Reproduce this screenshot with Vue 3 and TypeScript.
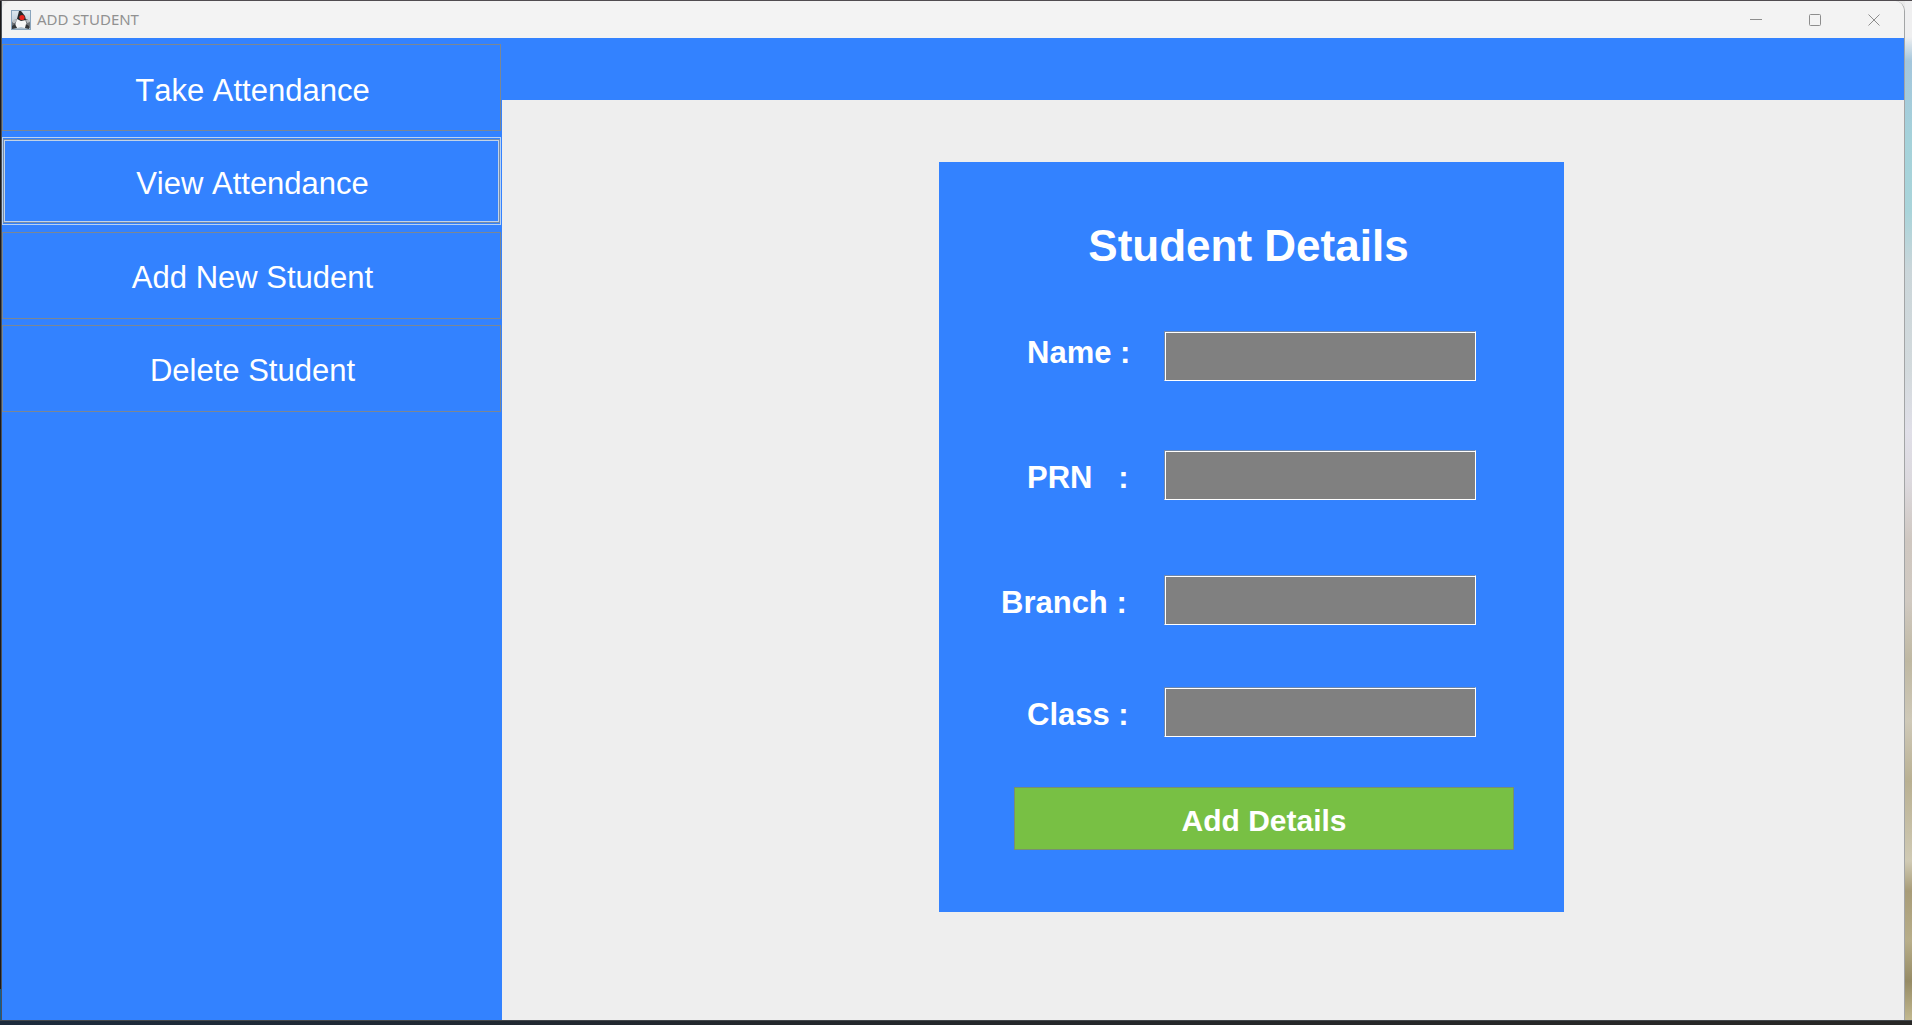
<script setup lang="ts">
import { reactive, ref } from 'vue'

interface Field {
  key: 'name' | 'prn' | 'branch' | 'class'
  label: string
}

const menu: string[] = ['Take Attendance', 'View Attendance', 'Add New Student', 'Delete Student']
const focused = ref('View Attendance')

const fields: Field[] = [
  { key: 'name', label: 'Name :' },
  { key: 'prn', label: 'PRN   :' },
  { key: 'branch', label: 'Branch :' },
  { key: 'class', label: 'Class :' },
]
const student = reactive({ name: '', prn: '', branch: '', class: '' })
</script>

<template>
  <div class="desktop">
    <div class="edge-left"></div>
    <div class="window">
      <header class="titlebar">
        <svg class="app-icon" viewBox="0 0 20 20" aria-hidden="true">
          <defs>
            <linearGradient id="iconBg" x1="0" y1="0" x2="0" y2="1">
              <stop offset="0" stop-color="#dfe9f1" />
              <stop offset="1" stop-color="#a9bccb" />
            </linearGradient>
          </defs>
          <rect x="0.5" y="0.5" width="19" height="19" fill="url(#iconBg)" stroke="#8aa5bd" />
          <path d="M1 12 L5 9 L7 10 L5 14 L6 18 L1 18Z M13 9 L16 9 L19 12 L19 18 L14 18Z" fill="#6d7378" />
          <path d="M6 9 L14 9 L16 16 L14 18 L10 17 L6 18 L4 16Z" fill="#f6f7f7" />
          <path d="M8 1 L10 1 L14 6 L15 10 L10 11 L6 9Z" fill="#26282b" />
          <path d="M1 11 L4 9 L6 10 L4 13 L2 13Z M15 10 L18 10 L19 12 L16 13Z" fill="#b9bec2" />
          <path d="M1 16 L4 14 L6 18 L1 19Z M15 14 L18 16 L18 19 L14 18Z" fill="#33373a" />
          <circle cx="11" cy="7.5" r="2.6" fill="#e8231f" />
        </svg>
        <h1 class="caption">ADD STUDENT</h1>
        <div class="controls">
          <button type="button" aria-label="Minimize">
            <svg viewBox="0 0 12 12"><path d="M0 5.5H12" /></svg>
          </button>
          <button type="button" aria-label="Maximize">
            <svg viewBox="0 0 12 12"><rect x="0.5" y="0.5" width="11" height="11" rx="1" /></svg>
          </button>
          <button type="button" aria-label="Close">
            <svg viewBox="0 0 12 12"><path d="M0.5 0.5L11.5 11.5M11.5 0.5L0.5 11.5" /></svg>
          </button>
        </div>
      </header>

      <div class="body">
        <nav class="sidebar">
          <div class="menu">
            <button
              v-for="item in menu"
              :key="item"
              type="button"
              class="menu-item"
              :class="{ focused: item === focused }"
              @click="focused = item"
            >
              {{ item }}
            </button>
          </div>
        </nav>

        <main class="main">
          <div class="banner"></div>
          <div class="stage">
            <form class="card" @submit.prevent>
              <h2 class="title">Student Details</h2>
              <div v-for="f in fields" :key="f.key" class="row" :class="f.key">
                <label :for="f.key">{{ f.label }}</label>
                <input :id="f.key" v-model="student[f.key]" type="text" autocomplete="off" />
              </div>
              <button type="submit" class="submit">Add Details</button>
            </form>
          </div>
        </main>
      </div>
    </div>
    <div class="edge-right"></div>
    <div class="taskbar"></div>
  </div>
</template>

<style>
body {
  margin: 0;
}
</style>

<style scoped>
.desktop {
  display: grid;
  grid-template-columns: 2px 1fr 7px;
  grid-template-rows: 1fr 5px;
  box-sizing: border-box;
  min-height: 100vh;
  border-top: 1px solid #504c50;
  background: #e9e9e9;
  font-family: "Liberation Sans", Arial, sans-serif;
  font-kerning: none;
}

.edge-left {
  border-right: 1px solid #4c5157;
  background: linear-gradient(#1b191a 0 97%, #0b5c94 97%);
}

.edge-right {
  background: linear-gradient(
    #efeff0 0 36px,
    #a4c6dc 60px,
    #a5d2da 140px,
    #a9d4da 210px,
    #cbd6da 270px,
    #d3dadd 370px,
    #e0dfe8 430px,
    #dcd9de 480px,
    #cfc7c0 540px,
    #d0c9c1 600px,
    #bfb8a2 660px,
    #cfc9b8 720px,
    #b9b092 780px,
    #d0cab4 860px,
    #a89c78 890px,
    #b8ae8a 940px,
    #968b65 980px,
    #c2b88f
  );
}

.taskbar {
  grid-column: 1 / -1;
  box-sizing: border-box;
  border-top: 1px solid #44484c;
  background: linear-gradient(90deg, #1c2b3c, #23272c 40%, #282726);
}

.window {
  display: flex;
  flex-direction: column;
  border-right: 1px solid #a3a5a6;
  border-radius: 10px 10px 0 0;
  overflow: hidden;
  background: #eeeeee;
}

.edge-left,
.window,
.edge-right {
  min-width: 0;
}

.titlebar {
  display: flex;
  align-items: center;
  height: 37px;
  padding-left: 9px;
  background: #f3f3f3;
}

.app-icon {
  width: 20px;
  height: 20px;
}

.caption {
  flex: 1;
  margin: 0 0 0 6px;
  padding-bottom: 2px;
  color: #919191;
  font: 400 15px/20px "Noto Sans", "Open Sans", sans-serif;
}

.controls {
  display: flex;
  align-self: stretch;
}

.controls button {
  display: flex;
  align-items: center;
  box-sizing: border-box;
  width: 59px;
  padding: 0 24px 0 23px;
  border: 0;
  background: none;
}

.controls svg {
  flex: none;
  width: 12px;
  height: 12px;
  fill: none;
  stroke: #8d8d8d;
}

.body {
  display: flex;
  flex: 1;
}

.sidebar {
  flex: none;
  box-sizing: border-box;
  width: 500px;
  padding: 6px 1px 0 0;
  background: #3382ff;
}

.menu {
  display: flex;
  flex-direction: column;
  justify-content: space-between;
  height: 368px;
}

.menu-item {
  position: relative;
  box-sizing: border-box;
  height: 87px;
  padding: 6px 0 0 2px;
  border: 1px solid #7b8794;
  background: #3382ff;
  color: #ffffff;
  font: inherit;
  font-size: 31px;
  outline: none;
}

.menu-item.focused {
  height: 88px;
  border-color: #b9d2f2;
}

/* Double focus ring drawn inside the button's own border */
.menu-item.focused::after {
  content: "";
  position: absolute;
  inset: 1px 0;
  border: 1px solid #758ba8;
  box-shadow: inset 0 0 0 1px #c3d3e6;
}

.main {
  display: flex;
  flex: 1;
  flex-direction: column;
  min-width: 0;
}

.banner {
  height: 62px;
  background: #3382ff;
}

.stage {
  display: grid;
  grid-template-columns: 437fr 625px 340fr;
  padding: 62px 0 48px;
}

.card {
  display: flex;
  grid-column: 2;
  flex-direction: column;
  box-sizing: border-box;
  padding: 58px 0 62px;
  background: #3382ff;
  color: #ffffff;
}

.title {
  margin: 0 6px 59px 0;
  font-size: 44px;
  line-height: 52px;
  text-align: center;
}

.row {
  display: flex;
  height: 50px;
  padding: 0 88px;
}

.row label {
  flex: 1;
  font-size: 31px;
  font-weight: 700;
  line-height: 56px;
  white-space: pre;
}

.row.name label {
  line-height: 44px;
}

.row.name {
  margin-bottom: 69px;
}

.row.prn {
  margin-bottom: 75px;
}

.row.branch {
  margin-bottom: 62px;
  padding-left: 62px;
}

.row.class {
  margin-bottom: 50px;
}

.row input {
  box-sizing: border-box;
  width: 312px;
  padding: 0 6px;
  border: 1px solid;
  border-color: #6f88ad #ffffff #ffffff #6f88ad;
  border-radius: 0;
  background: #808080;
  box-shadow: inset 1px 1px 0 #ffffff;
  color: #ffffff;
  font: inherit;
  font-size: 24px;
  outline: none;
}

.submit {
  box-sizing: border-box;
  height: 63px;
  margin: 0 50px 0 75px;
  padding: 4px 0 0;
  border: 1px solid #769070;
  background: #78c044;
  color: #ffffff;
  font: inherit;
  font-size: 30px;
  font-weight: 700;
}
</style>
